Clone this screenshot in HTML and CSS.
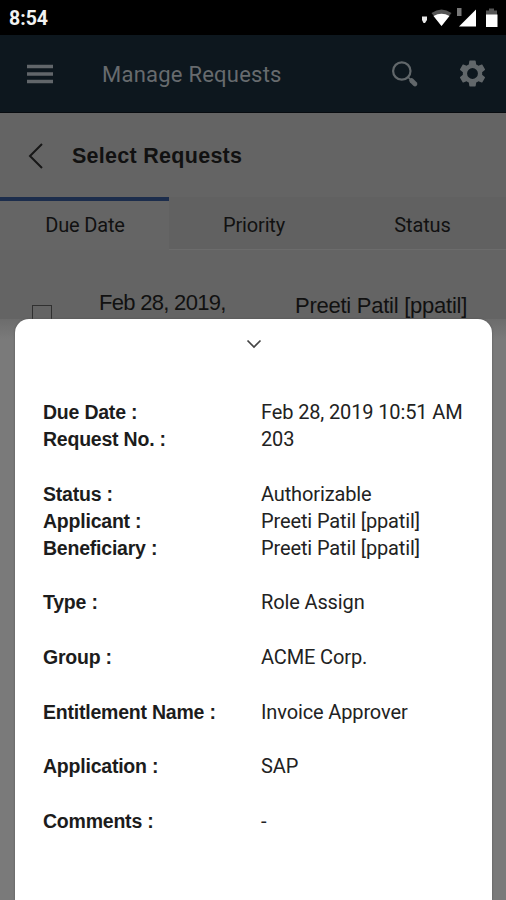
FILE: index.html
```html
<!DOCTYPE html>
<html lang="en">
<head>
<meta charset="utf-8">
<title>Manage Requests</title>
<link rel="stylesheet" href="styles.css">
</head>
<body>
<div class="screen">
  <div class="statusbar">
    <span class="clock">8:54</span>
    <svg class="signals" width="80" height="24" viewBox="0 0 80 24">
      <path d="M3 8.500h5v3.500l-2 3H4.500L3 12z" fill="#e8e8e8"/>
      <path d="M12.500 5Q22.500 -2 32.500 5L22.500 18z" fill="#555"/>
      <path d="M14.500 8Q22.500 3.500 30.500 8L22.500 18z" fill="#fff"/>
      <path d="M38 0h4.500v8H38z" fill="#777"/>
      <path d="M57 1.500V18.500H40z" fill="#fff"/>
      <path d="M70 .5h5v2h3v5H67v-5h3z" fill="#555"/>
      <path d="M67 6.500h11.500v12.500H67z" fill="#fff"/>
    </svg>
  </div>
  <header class="appbar">
    <svg class="menu" width="28" height="20" viewBox="0 0 28 20"><path d="M1 2.500h26M1 10h26M1 17.500h26" stroke="#61666a" stroke-width="3.600"/></svg>
    <h1 class="title">Manage Requests</h1>
    <svg class="search" width="28" height="28" viewBox="0 0 28 28" fill="none" stroke="#61676a"><circle cx="10.800" cy="11" r="8.700" stroke-width="2.200"/><path d="m17 17 3 3" stroke-width="1.500"/><path d="m20.500 20.500 3.500 3.500" stroke-width="4.600" stroke-linecap="round"/></svg>
    <svg class="gear" width="31" height="31" viewBox="0 0 24 24" fill="#61676a"><path d="M19.430 12.980c.04-.32.070-.64.070-.98s-.03-.66-.07-.98l2.110-1.650c.19-.15.240-.42.120-.64l-2-3.460c-.12-.22-.39-.3-.61-.22l-2.490 1c-.52-.4-1.080-.73-1.690-.98l-.38-2.650C14.460 2.180 14.250 2 14 2h-4c-.25 0-.46.180-.49.420l-.38 2.650c-.61.250-1.170.59-1.690.98l-2.490-1c-.23-.09-.49 0-.61.220l-2 3.460c-.13.220-.07.490.12.640l2.110 1.650c-.04.320-.07.650-.07.980s.03.660.07.980l-2.110 1.650c-.19.150-.24.420-.12.640l2 3.460c.12.220.39.300.61.220l2.490-1c.52.400 1.080.730 1.690.980l.38 2.650c.03.240.24.420.49.420h4c.25 0 .46-.18.490-.42l.38-2.650c.61-.25 1.170-.59 1.690-.98l2.490 1c.23.090.49 0 .61-.22l2-3.460c.12-.22.070-.49-.12-.64zM12 16.200a4.200 4.200 0 1 1 0-8.400 4.200 4.200 0 0 1 0 8.400z"/></svg>
  </header>
  <div class="subheader">
    <svg class="back" width="16" height="26" viewBox="0 0 16 26"><path d="M14 1 2 13l12 12" fill="none" stroke="#171717" stroke-width="2"/></svg>
    <h2 class="heading">Select Requests</h2>
  </div>
  <nav class="tabs">
    <div class="tab active"><span>Due Date</span></div>
    <div class="tab"><span>Priority</span></div>
    <div class="tab"><span>Status</span></div>
  </nav>
  <div class="row">
    <span class="checkbox"></span>
    <span class="date">Feb 28, 2019,</span>
    <span class="person">Preeti Patil [ppatil]</span>
  </div>
  <div class="backdrop">
    <section class="sheet">
      <svg class="chevron" width="16" height="10" viewBox="0 0 16 10"><path d="m1.500 1.500 6.500 6.500 6.500-6.500" fill="none" stroke="#444" stroke-width="1.700"/></svg>
      <dl class="details">
        <div class="item"><dt>Due Date :</dt><dd>Feb 28, 2019 10:51 AM</dd></div>
        <div class="item"><dt>Request No. :</dt><dd>203</dd></div>
        <div class="item gap"><dt>Status :</dt><dd>Authorizable</dd></div>
        <div class="item"><dt>Applicant :</dt><dd>Preeti Patil [ppatil]</dd></div>
        <div class="item"><dt>Beneficiary :</dt><dd>Preeti Patil [ppatil]</dd></div>
        <div class="item gap"><dt>Type :</dt><dd>Role Assign</dd></div>
        <div class="item gap"><dt>Group :</dt><dd>ACME Corp.</dd></div>
        <div class="item gap"><dt>Entitlement Name :</dt><dd>Invoice Approver</dd></div>
        <div class="item gap"><dt>Application :</dt><dd>SAP</dd></div>
        <div class="item gap"><dt>Comments :</dt><dd>-</dd></div>
      </dl>
    </section>
  </div>
</div>
</body>
</html>
```
FILE: styles.css
```css
* { box-sizing: border-box; }
body, h1, h2, dl, dd { margin: 0; }
svg { display: block; flex: none; }
.screen {
  position: relative;
  width: 506px;
  height: 900px;
  overflow: hidden;
  background: #646464;
  color: #111;
  font-family: Roboto, sans-serif;
  white-space: nowrap;
}
.statusbar {
  display: flex;
  justify-content: space-between;
  height: 35px;
  padding: 8px 5px 0 9px;
  background: #000;
}
.clock { color: #f2f2f2; font-size: 19.500px; font-weight: 700; line-height: 22px; }
.signals { margin-right: 2px; }
.appbar {
  display: flex;
  align-items: center;
  height: 78px;
  padding: 0 18px 0 26px;
  background: #0d171e;
  border-bottom: 1px solid #080c10;
}
.title {
  margin: 2px 0 0 48px;
  color: #676b6e;
  font-size: 22px;
  font-weight: 400;
  letter-spacing: 0.230px;
}
.search { margin-left: auto; }
.gear { margin-left: 38px; }
.subheader {
  display: flex;
  align-items: center;
  height: 84px;
  padding: 2px 0 0 28px;
}
.heading {
  margin: 1px 0 0 28px;
  font-family: "Liberation Sans", sans-serif;
  font-size: 21.500px;
  font-weight: 700;
  letter-spacing: 0.280px;
}
.tabs { display: grid; grid-template-columns: 169px 169px 168px; height: 53px; }
.tab {
  border-top: 4px solid #616161;
  border-bottom: 1px solid #6c6c6c;
  padding: 12px 0 0 1px;
  text-align: center;
  font-size: 20px;
  line-height: 24px;
  letter-spacing: -0.150px;
  background: #616161;
}
.active { border-top-color: #1c2d4c; border-bottom-color: #656565; background: #656565; }
.row {
  display: grid;
  grid-template-columns: 67px 196px 1fr;
  align-items: start;
  padding: 40px 0 0 32px;
  font-family: "Liberation Sans", sans-serif;
  font-size: 22px;
  line-height: 26px;
}
.checkbox { width: 20px; height: 20px; margin-top: 15px; border: 1px solid #303030; }
.date { letter-spacing: -0.700px; }
.person { margin-top: 3px; letter-spacing: -0.250px; }
.backdrop {
  position: absolute;
  inset: 319px 0 0;
  padding: 0 14px 0 15px;
  background: linear-gradient(#6c6c6c, #7a7a7a 20px);
}
.sheet {
  height: 100%;
  padding: 20px 28px 0;
  border-radius: 14px 14px 0 0;
  background: #fff;
  box-shadow: 0 0 2px #505050;
}
.chevron { margin: 0 auto; }
.details { padding-top: 49px; color: #222; font-size: 20px; line-height: 28px; }
.item { display: grid; grid-template-columns: 218px 1fr; height: 27px; }
.gap { margin-top: 27.700px; }
dt {
  color: #1c1c1c;
  font-family: "Liberation Sans", sans-serif;
  font-size: 19.500px;
  font-weight: 700;
  letter-spacing: -0.220px;
}
dd { letter-spacing: -0.130px; }
```
